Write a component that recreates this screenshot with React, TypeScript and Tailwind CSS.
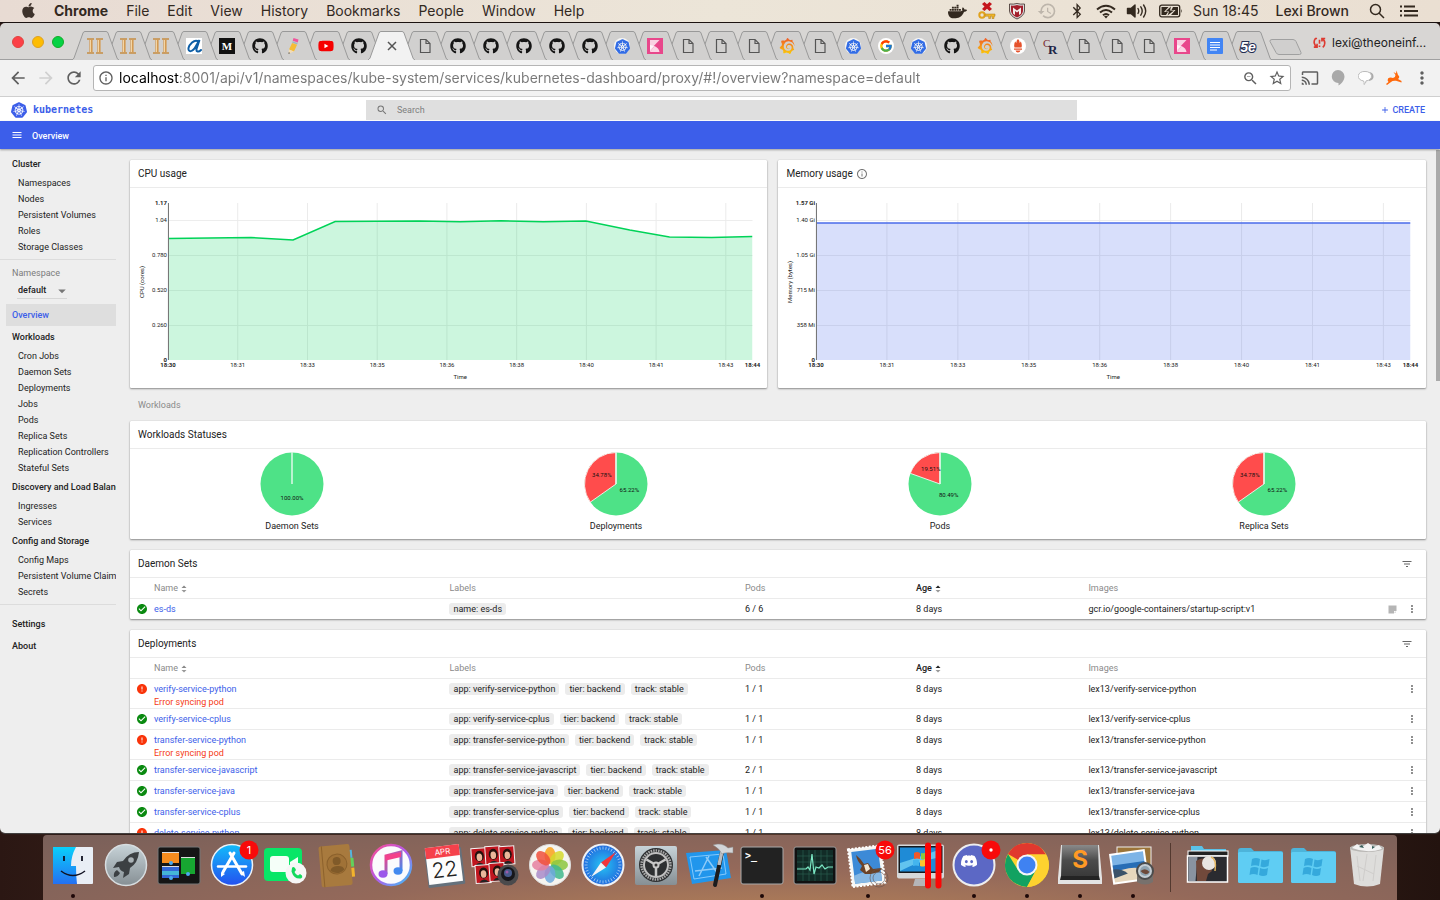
import React from 'react';
import { FaApple, FaBluetoothB, FaGithub, FaYoutube } from 'react-icons/fa';
import { SiDiscord, SiDocker, SiGrafana, SiKubernetes } from 'react-icons/si';
import { FcGoogle } from 'react-icons/fc';
import {
  MdAdd, MdArrowBack, MdArrowForward, MdCast, MdCheckCircle, MdError, MdFilterList, MdInfoOutline,
  MdMenu, MdMoreVert, MdRefresh, MdSearch, MdStarBorder, MdArrowDropDown, MdHistory, MdZoomOut,
} from 'react-icons/md';

/* ---------- Menu bar ---------- */

const menus = ['File', 'Edit', 'View', 'History', 'Bookmarks', 'People', 'Window', 'Help'];

function KeyIcon() {
  return (
    <svg viewBox="0 0 18 18" className="size-[18px]">
      <path d="M4 2 6.500 0 9 2.200 11.500 0 14 2l-2.500 2.500L14 7l-2.500 2L9 6.800 6.500 9 4 7l2.500-2.500Z" fill="#c4151c" />
      <circle cx="4" cy="13" r="2.700" fill="none" stroke="#e0a21d" strokeWidth="2" />
      <path d="M7 12h10v2.200h-1V16.500h-2v-2.300H12.500V16.500h-1.800v-2.300H7Z" fill="#eeb62b" stroke="#a87416" strokeWidth=".5" />
    </svg>
  );
}

function ShieldIcon() {
  return (
    <svg viewBox="0 0 18 18" className="size-[18px]">
      <path d="M1.500 2Q5.500 2.500 9 1.500 12.500 2.500 16.500 2V9Q16 14 9 17 2 14 1.500 9Z" fill="#ddd" stroke="#3a2a26" strokeWidth=".8" />
      <path d="M3 3.500Q6 4 9 3 12 4 15 3.500V9Q14.500 13 9 15.500 3.500 13 3 9Z" fill="#a31f2b" />
      <path d="M5 11.500V5.500L9 8.500 13 5.500V11.500L11 13V9L9 10.500 7 9V13Z" fill="#f3efec" />
    </svg>
  );
}

function MenuBar() {
  return (
    <header className="flex h-[23px] shrink-0 items-center border-b border-[#1b1210] bg-linear-to-r from-[#e8dbd3] via-[#ece5d8] to-[#eadfd2] pr-[22px] pl-5 text-[14px] leading-[22px] text-[#33291f]">
      <FaApple className="mb-0.5 size-[17px] text-[#3d322b]" />
      <nav className="ml-[17px] flex gap-[18px]">
        <span className="font-bold">Chrome</span>
        {menus.map((m) => <span key={m}>{m}</span>)}
      </nav>
      <div className="ml-auto flex items-center">
        <span className="flex w-[29px] justify-center"><SiDocker className="size-[19px]" /></span>
        <span className="flex w-[30px] justify-center"><KeyIcon /></span>
        <span className="flex w-[30px] justify-center"><ShieldIcon /></span>
        <span className="flex w-[30px] justify-center"><MdHistory className="size-5 text-[#bdb5ab]" /></span>
        <span className="flex w-[29px] justify-center"><FaBluetoothB className="size-4" /></span>
        <span className="flex w-[30px] justify-center">
          <svg viewBox="0 0 20 15" className="h-[15px] w-5" fill="none" stroke="currentColor" strokeWidth="2">
            <path d="M1 5.500q9-7.500 18 0M4 8.500q6-5 12 0M7 11.300q3-2.600 6 0" /><path d="M8 12.300q2-1.300 4 0L10 14.500Z" fill="currentColor" stroke="none" />
          </svg>
        </span>
        <span className="flex w-8 justify-center">
          <svg viewBox="0 0 22 16" className="h-4 w-[22px]" fill="none" stroke="currentColor" strokeWidth="1.400" strokeLinecap="round">
            <path d="M1.500 5.500H5L9 2v12L5 10.500H1.500Z" fill="currentColor" strokeLinejoin="round" />
            <path d="M12 5.500q1.500 2.500 0 5M14.800 3.800q2.800 4.200 0 8.400M17.600 2q4.200 6 0 12" />
          </svg>
        </span>
        <span className="flex w-9 justify-center">
          <svg viewBox="0 0 24 14" className="h-[14px] w-6">
            <rect x=".7" y="1.200" width="20" height="11.600" rx="2" fill="none" stroke="currentColor" strokeWidth="1.300" />
            <path d="M2.500 3H9.500L5 8H9L7 11H2.500ZM14 3H19V11H12L16.500 6H12.500Z" fill="currentColor" />
            <path d="M12 2.500 6.500 7.500H10L8.500 11.500 15 6.500H11Z" fill="currentColor" />
            <path d="M22 5q1.500 2 0 4Z" fill="currentColor" />
          </svg>
        </span>
        <span className="ml-1">Sun 18:45</span>
        <span className="ml-[17px] font-medium">Lexi Brown</span>
        <svg viewBox="0 0 16 16" className="ml-5 size-4" fill="none" stroke="currentColor" strokeWidth="1.500">
          <circle cx="6.500" cy="6.500" r="5" /><path d="m10 10 5 5" />
        </svg>
        <svg viewBox="0 0 18 12" className="ml-[15px] h-3 w-[18px]" stroke="currentColor" strokeWidth="2">
          <path d="M0 1.500h2M4 1.500h11M0 6h2M4 6h14M0 10.500h2M4 10.500h14" />
        </svg>
      </div>
    </header>
  );
}

/* ---------- Tabs ---------- */

const K8s = () => (
  <span className="flex size-4 items-center justify-center rounded-full bg-white/80">
    <SiKubernetes className="size-[15px] text-[#326ce5]" />
  </span>
);
const Git = () => <FaGithub className="size-4 text-[#151515]" />;
const Pillars = () => (
  <svg viewBox="0 0 16 16" className="size-4" fill="none">
    <path d="M0 1h16M0 15h16" stroke="#c58d45" strokeWidth="1.600" strokeDasharray="7 2" />
    <path d="M4 1.500v13M12 1.500v13" stroke="#d39a52" strokeWidth="3.200" />
    <path d="M3.500 2v12M11.500 2v12" stroke="#f3d6a6" />
  </svg>
);
const LetterA = () => (
  <svg viewBox="0 0 16 16" className="size-4">
    <rect width="16" height="16" fill="#fff" />
    <path d="M11.500 3C8 1.500 3.500 6 2.500 10c-.5 4.500 4 4.500 7.500-2L13.500 2 10.500 11c-.5 3 2 3.500 4.500 1" fill="none" stroke="#0d5ea6" strokeWidth="2" strokeLinecap="round" />
  </svg>
);
const Medium = () => (
  <svg viewBox="0 0 16 16" className="size-4">
    <rect width="16" height="16" fill="#111" />
    <text x="8" y="12" textAnchor="middle" fontSize="11" fontWeight="700" fill="#fff" fontFamily="Liberation Serif, serif">M</text>
  </svg>
);
const Pencil = () => (
  <svg viewBox="0 0 16 16" className="size-4">
    <path d="M8.500 0 13.500 1.600 12.800 4.500 7.700 2.800Z" fill="#f0559c" />
    <path d="M7.600 3.200 12.600 4.900 12.200 6.500 7.200 4.800Z" fill="#9fb4c0" />
    <path d="M7.100 5.100 12.100 6.800 9 13.500 4 11.500Z" fill="#f6bc36" />
    <path d="M4 11.500 9 13.500 3.500 16Z" fill="#f3dcb5" /><path d="m3.700 14.300 1.500.7L3.500 16Z" fill="#444" />
  </svg>
);
const Youtube = () => (
  <span className="relative flex size-4 items-center justify-center">
    <span className="absolute size-2 bg-white" /><FaYoutube className="relative size-4 text-[#f60000]" />
  </span>
);
const Page = () => (
  <svg viewBox="0 0 16 16" className="size-4" fill="none" stroke="#555" strokeWidth="1.200">
    <path d="M3.500 1.500H9L13 5.500V14.500H3.500ZM9 1.500V5.500H13" />
  </svg>
);
const Kibana = () => (
  <svg viewBox="0 0 16 16" className="size-4">
    <rect width="16" height="16" fill="#e8478b" />
    <path d="M3 2h9.500L3 12Z" fill="#fff" fillOpacity=".75" /><path d="M3 14 7.500 8q4.500 2 5 6Z" fill="#fbd5e5" /><path d="M3 7v7l4.500-6Z" fill="#fff" fillOpacity=".8" />
  </svg>
);
const Grafana = () => (
  <span className="flex size-4">
    <svg width="0" height="0" className="absolute">
      <defs><linearGradient id="graf" x1="0" y1="0" x2="0" y2="1"><stop offset="0" stopColor="#f05a28" /><stop offset="1" stopColor="#fbca0a" /></linearGradient></defs>
    </svg>
    <SiGrafana className="size-4 fill-[url(#graf)]" />
  </span>
);
const Google = () => <span className="flex size-4 items-center justify-center rounded-full bg-white"><FcGoogle className="size-[14px]" /></span>;
const Prom = () => (
  <span className="flex size-4 items-center justify-center rounded-full bg-white">
    <svg viewBox="0 0 12 14" className="h-[14px] w-3" fill="#e6522c">
      <path d="M6 0q2 2 1.500 4Q9 3 8.500 2q2 3 1 6.500h-7Q1.500 5 3.500 2 3 3 4.500 4 4 2 6 0ZM2 9.500h8v1.300H2ZM3.500 11.500h5q-.5 2-2.500 2t-2.500-2Z" />
    </svg>
  </span>
);
const Cr = () => (
  <svg viewBox="0 0 16 16" className="size-4 overflow-visible" fontFamily="Liberation Serif, serif">
    <text x="0" y="9" fontSize="11" fill="#7a2a2e">C</text><text x="5" y="16" fontSize="13" fontWeight="700" fill="#1d2547">R</text>
  </svg>
);
const Doc = () => (
  <svg viewBox="0 0 16 16" className="size-4">
    <rect width="16" height="16" rx="1" fill="#4285f4" /><path d="M3 4.500h10M3 7h10M3 9.500h10M3 12h7" stroke="#fff" strokeWidth="1.200" />
  </svg>
);
const FiveE = () => (
  <svg viewBox="0 0 16 16" className="size-4 overflow-visible">
    <text x="8" y="13.500" textAnchor="middle" fontSize="14" fontWeight="700" fontStyle="italic" fill="#fff" stroke="#232d52" strokeWidth="2" paintOrder="stroke" fontFamily="Liberation Sans, sans-serif">5e</text>
  </svg>
);
const CloseX = () => (
  <svg viewBox="0 0 16 16" className="size-4" stroke="#555" strokeWidth="1.500"><path d="m4 4 8 8M12 4l-8 8" /></svg>
);

const tabs = [
  Pillars, Pillars, Pillars, LetterA, Medium, Git, Pencil, Youtube, Git, CloseX, Page, Git, Git, Git, Git, Git, K8s,
  Kibana, Page, Page, Page, Grafana, Page, K8s, Google, K8s, Git, Grafana, Prom, Cr, Page, Page, Page, Kibana, Doc, FiveE,
];
const ACTIVE = 9;

function TabStrip() {
  return (
    <div className="flex h-[37px] shrink-0 border-b border-[#a0a0a0] bg-[#d8d6d4]">
      <div className="flex w-[79px] shrink-0 items-center gap-2 pt-px pl-3">
        <button aria-label="Close window" className="size-3 rounded-full border border-[#e0443e] bg-[#fc4047]" />
        <button aria-label="Minimise window" className="size-3 rounded-full border border-[#dea123] bg-[#fdbc02]" />
        <button aria-label="Zoom window" className="size-3 rounded-full border border-[#12ac28] bg-[#05d244]" />
      </div>
      <div className="flex min-w-0 flex-1 pt-2">
        {tabs.map((Icon, i) => (
          <button key={i} aria-label={`Tab ${i + 1}`} className="relative flex h-[29px] min-w-0 flex-1 items-center justify-center" style={{ zIndex: i === ACTIVE ? 50 : 40 - i }}>
            <svg viewBox="0 0 47 29" preserveAspectRatio="none" className="absolute -left-[7px] h-[29px] w-[47px]">
              <path d="M0 29 Q1.500 28 2 27 L11 2 Q11.500.5 13 .5 H34 Q35.500.5 36 2 L45 27 Q45.500 28.500 47 29" fill={i === ACTIVE ? '#f2f2f2' : '#d1d0cf'} stroke="#999" />
            </svg>
            <span className="relative shrink-0 pt-px"><Icon /></span>
          </button>
        ))}
      </div>
      <div className="flex w-[175px] shrink-0 items-center">
        <button aria-label="New tab" className="mt-[11px] ml-1">
          <svg viewBox="0 0 34 16" className="h-4 w-[34px]"><path d="M3 .5h21q2 0 3 2l5 11q.5 2-1.500 2H10q-2 0-3-2l-6-11q-.5-2 2-2Z" fill="#d0cfce" stroke="#a0a0a0" /></svg>
        </button>
        <button className="mt-[3px] ml-2.5 flex items-center text-[12px] leading-4 text-[#222]">
          <svg viewBox="0 0 16 14" className="mr-1.5 h-3 w-[13px]" fill="none" stroke="#dd3b31" strokeWidth="2">
            <path d="M5 1.500H3Q1 4 1.500 7T5 12M1 12h4V8M11 1.500q3.500 2 3.500 5.500T12 12.500M15 1.500h-4V5M8 3v5M8 10v2" />
          </svg>
          lexi@theoneinf...
        </button>
      </div>
    </div>
  );
}

function Toolbar() {
  return (
    <div className="flex h-[37px] shrink-0 items-center border-b border-[#cfcfcf] bg-[#f2f2f2] px-1 text-[#5f5f5f]">
      <button aria-label="Back" className="flex w-7 justify-center"><MdArrowBack className="size-5" /></button>
      <button aria-label="Forward" className="flex w-7 justify-center text-[#d0d0d0]"><MdArrowForward className="size-5" /></button>
      <button aria-label="Reload" className="flex w-7 justify-center"><MdRefresh className="size-5" /></button>
      <div className="ml-[5px] flex h-[26px] min-w-0 flex-1 items-center rounded-[3px] border border-[#b5b5b5] bg-white pl-1">
        <MdInfoOutline className="size-4 shrink-0" />
        <input
          aria-label="Address"
          defaultValue="localhost:8001/api/v1/namespaces/kube-system/services/kubernetes-dashboard/proxy/#!/overview?namespace=default"
          className="ml-[5px] min-w-0 flex-1 bg-linear-to-r from-black from-[60px] to-[#777] to-[60px] bg-clip-text text-[14px] leading-5 text-transparent outline-none"
        />
        <button aria-label="Zoomed out" className="flex w-7 justify-center"><MdZoomOut className="size-[17px]" /></button>
        <button aria-label="Bookmark" className="flex w-[26px] justify-center"><MdStarBorder className="size-[18px]" /></button>
      </div>
      <div className="ml-[5px] flex items-center">
        <button aria-label="Cast" className="flex w-7 justify-center"><MdCast className="size-[18px]" /></button>
        <button aria-label="Hangouts" className="flex w-7 justify-center">
          <svg viewBox="0 0 16 16" className="size-4"><path d="M8 0a6.500 6.500 0 0 1 6.500 6.500C14.500 10 12 13.500 8.500 15.500V13A6.500 6.500 0 0 1 8 0Z" fill="#a9a9a9" /></svg>
        </button>
        <button aria-label="Chat" className="flex w-7 justify-center">
          <svg viewBox="0 0 16 16" className="size-4"><path d="M10 2q5 0 5.500 4T11 11Z" fill="#aaa" /><path d="M7 1.500a6 4.700 0 0 1 1 9.400q0 2.500-2 3.600.5-2-.5-3.600A6 4.700 0 0 1 7 1.500Z" fill="#fff" stroke="#bbb" /></svg>
        </button>
        <button aria-label="Rabbit" className="flex w-7 justify-center">
          <svg viewBox="0 0 16 16" className="size-4" fill="#ff6a0d">
            <path d="M0 14 2.500 12Q1 10.500 2 8.500 4 7 7 8q2.500-.5 2.500-3L7.500 2 10 3.500 10.500.5 12 5q2.500 2 0 4l3.500 2V12.500L10 10.800q-3.500-.3-5 1.200L1 15Z" />
          </svg>
        </button>
        <button aria-label="Menu" className="flex w-7 justify-center"><MdMoreVert className="size-5" /></button>
      </div>
    </div>
  );
}

/* ---------- Dashboard ---------- */

const sections = [
  { title: 'Workloads', items: ['Cron Jobs', 'Daemon Sets', 'Deployments', 'Jobs', 'Pods', 'Replica Sets', 'Replication Controllers', 'Stateful Sets'] },
  { title: 'Discovery and Load Balancing', items: ['Ingresses', 'Services'] },
  { title: 'Config and Storage', items: ['Config Maps', 'Persistent Volume Claims', 'Secrets'] },
];

function NavSection({ title, items }: { title: string; items: string[] }) {
  return (
    <section>
      <a href="#" className="block pl-3 font-medium leading-[22px]">{title}</a>
      <ul>
        {items.map((it) => <li key={it}><a href="#" className="block pl-[18px] leading-4">{it}</a></li>)}
      </ul>
    </section>
  );
}

function Sidebar() {
  return (
    <nav className="w-[116px] shrink-0 overflow-hidden pt-[3px] whitespace-nowrap">
      <NavSection title="Cluster" items={['Namespaces', 'Nodes', 'Persistent Volumes', 'Roles', 'Storage Classes']} />
      <div className="mt-1 border-t border-[#dcdcdc] pt-[5px]">
        <label htmlFor="ns" className="block pl-3 leading-4 text-[#7c7c7c]">Namespace</label>
        <div className="relative mt-0.5 ml-[17px] flex h-4 w-[50px] items-center border-b border-[#d6d6d6]">
          <select id="ns" className="w-full appearance-none bg-transparent pl-px font-medium outline-none"><option>default</option></select>
          <MdArrowDropDown className="pointer-events-none absolute -right-1 size-[18px] text-[#777]" />
        </div>
      </div>
      <a href="#" className="mt-[5px] ml-1.5 block bg-[#dedede] pl-1.5 font-medium leading-[22px] text-[#3c5ee9]">Overview</a>
      {sections.map((s) => <NavSection key={s.title} {...s} />)}
      <div className="mt-1 border-t border-[#dcdcdc] pt-2 font-medium leading-[22px]">
        <a href="#" className="block pl-3">Settings</a>
        <a href="#" className="block pl-3">About</a>
      </div>
    </nav>
  );
}

function Card({ title, action, children }: { title: React.ReactNode; action?: React.ReactNode; children: React.ReactNode }) {
  return (
    <section className="min-w-0 rounded-[1px] bg-white shadow-[0_1px_2px_rgba(0,0,0,0.4),0_0_1px_rgba(0,0,0,0.25)]">
      <div className="flex h-7 items-center justify-between border-b border-[#ebebeb] pr-[13px] pl-2">
        <h2 className="flex items-center gap-[3px] text-[10px] leading-4">{title}</h2>
        {action}
      </div>
      {children}
    </section>
  );
}

const times = ['18:30', '18:31', '18:33', '18:35', '18:36', '18:38', '18:40', '18:41', '18:43'];

type ChartProps = { unit: string; labels: string[]; points: [number, number][]; line: string; fill: string };

/* Points are given as per mille of the plot's width and as pixels below its top. */
function Chart({ unit, labels, points, line, fill }: ChartProps) {
  const path = points.map(([x, y]) => `${x},${y}`).join(' ');
  const ys = [0, 17, 52, 87, 122, 157];
  return (
    <div className="h-[200px] pt-[15px] pr-[15px] pl-[38px]">
      <svg className="block h-[157px] w-full overflow-visible" fontSize="6" fill="#222" role="img" aria-label={unit}>
        {ys.slice(1, 5).map((y) => <line key={y} x1="0" x2="100%" y1={y + 0.5} y2={y + 0.5} stroke="#ededed" />)}
        {times.map((t, i) => <line key={t} x1={`${i * 11.93}%`} x2={`${i * 11.93}%`} y1="0" y2="157" stroke="#ebebeb" />)}
        <svg viewBox="0 0 1000 157" preserveAspectRatio="none" width="100%" height="157">
          <polygon points={`0,157 ${path} 1000,157`} fill={fill} fillOpacity=".2" />
          <polyline points={path} fill="none" stroke={line} strokeWidth="1.600" vectorEffect="non-scaling-stroke" />
        </svg>
        <line x1=".5" x2=".5" y1="0" y2="157" stroke="#777" />
        {labels.map((l, i) => (
          <text key={l} x="-1" y={ys[i] + 2} textAnchor="end" fontWeight={i === 0 || i === 5 ? 700 : 400}>{l}</text>
        ))}
        {times.map((t, i) => (
          <text key={t} x={`${i * 11.93}%`} y="164" textAnchor="middle" fontWeight={i === 0 ? 700 : 400}>{t}</text>
        ))}
        <text x="100%" y="164" textAnchor="middle" fontWeight="700">18:44</text>
        <text x="50%" y="176" textAnchor="middle">Time</text>
        <text transform="translate(-24 79) rotate(-90)" textAnchor="middle">{unit}</text>
      </svg>
    </div>
  );
}

function Pie({ name, red }: { name: string; red: number }) {
  const a = -red * 2 * Math.PI;
  const x = 32 + 31.5 * Math.sin(a);
  const y = 32 - 31.5 * Math.cos(a);
  const g = Math.PI * (1 - red);
  return (
    <div className="flex flex-col items-center pt-[3px]">
      <svg viewBox="0 0 64 64" className="size-16" fontSize="6" textAnchor="middle" fill="#111">
        <circle cx="32" cy="32" r="31.500" fill="#4ee287" />
        {red > 0 && <path d={`M32 32 L${x} ${y} A31.500 31.500 0 0 1 32 .5Z`} fill="#ff4c4c" stroke="#fff" strokeOpacity=".8" />}
        <path d="M32 0v32" stroke="#dff8e8" strokeWidth="1.500" />
        {red > 0 && <text x={32 - 16 * Math.sin(Math.PI * red)} y={32 - 16 * Math.cos(Math.PI * red)}>{(red * 100).toFixed(2)}%</text>}
        <text x={32 + 15 * Math.sin(g)} y={34 - 14 * Math.cos(g)}>{((1 - red) * 100).toFixed(2)}%</text>
      </svg>
      <span className="mt-0.5 leading-4">{name}</span>
    </div>
  );
}

function Sort({ active = false }: { active?: boolean }) {
  return (
    <svg viewBox="0 0 6 8" className="ml-[3px] inline h-2 w-1.5">
      <path d="M.5 3 3 .5 5.500 3Z" fill={active ? '#222' : '#888'} /><path d="M.5 5 3 7.500 5.500 5Z" fill="#999" />
    </svg>
  );
}

type Row = { name: string; labels: string[]; pods: string; image: string; error?: string; logs?: boolean };

const svc = (name: string, bad = false, pods = '1 / 1'): Row => ({
  name, pods, image: `lex13/${name}`, labels: [`app: ${name}`, 'tier: backend', 'track: stable'], error: bad ? 'Error syncing pod' : undefined,
});

const daemonSets: Row[] = [{ name: 'es-ds', labels: ['name: es-ds'], pods: '6 / 6', image: 'gcr.io/google-containers/startup-script:v1', logs: true }];
const deployments: Row[] = [
  svc('verify-service-python', true), svc('verify-service-cplus'), svc('transfer-service-python', true),
  svc('transfer-service-javascript', false, '2 / 1'), svc('transfer-service-java'), svc('transfer-service-cplus'), svc('delete-service-python', true),
];

function ResourceTable({ rows }: { rows: Row[] }) {
  return (
    <table className="w-full table-fixed border-separate border-spacing-0 text-left whitespace-nowrap">
      <colgroup>
        <col className="w-6" /><col className="w-[22.800%]" /><col className="w-[22.800%]" /><col className="w-[13.200%]" /><col className="w-[13.300%]" /><col /><col className="w-[50px]" />
      </colgroup>
      <thead>
        <tr className="h-5 leading-5 text-[#8a8a8a]">
          <th className="p-0" aria-label="Status" />
          <th className="p-0 font-normal">Name<Sort /></th>
          <th className="p-0 font-normal">Labels</th>
          <th className="p-0 font-normal">Pods</th>
          <th className="p-0 font-medium text-[#222]">Age<Sort active /></th>
          <th className="p-0 font-normal">Images</th>
          <th className="p-0" aria-label="Actions" />
        </tr>
      </thead>
      <tbody>
        {rows.map((r) => (
          <tr key={r.name} className={r.error ? 'h-[30px] align-top leading-5 *:border-t *:border-[#ebebeb]' : 'h-[21px] align-top leading-5 *:border-t *:border-[#ebebeb]'}>
            <td className="p-0 pt-1 pl-1.5">
              {r.error ? <MdError className="size-3 text-[#f9340a]" /> : <MdCheckCircle className="size-3 text-[#0a8a10]" />}
            </td>
            <td className="p-0">
              <a href="#" className="block text-[#3c5ee9]">{r.name}</a>
              {r.error && <div className="-mt-1 h-[13px] leading-[14px] text-[#f53b16]">{r.error}</div>}
            </td>
            <td className="p-0">
              <div className="flex h-5 items-center gap-1.5">
                {r.labels.map((l) => <span key={l} className="rounded-[3px] bg-[#ececec] px-1 leading-3">{l}</span>)}
              </div>
            </td>
            <td className="p-0">{r.pods}</td>
            <td className="p-0">8 days</td>
            <td className="p-0">{r.image}</td>
            <td className="p-0">
              <div className="flex h-5 items-center justify-end gap-[9px] pr-2 text-[#777]">
                {r.logs && (
                  <button aria-label="Logs">
                    <svg viewBox="0 0 9 9" className="size-[9px]"><path d="M.5.5h8V6H6v2.500H.5ZM6.700 8.200V6.700h1.500Z" fill="#b5b5b5" /></svg>
                  </button>
                )}
                <button aria-label="More"><MdMoreVert className="size-3" /></button>
              </div>
            </td>
          </tr>
        ))}
      </tbody>
    </table>
  );
}

const filterButton = <button aria-label="Filter"><MdFilterList className="size-3 text-[#666]" /></button>;

function Dashboard() {
  return (
    <div className="flex min-h-0 flex-1 flex-col bg-[#eeeeee] font-['Roboto',sans-serif] text-[9px] text-[#222]">
      <header className="flex h-6 shrink-0 items-center bg-white pt-px">
        <a href="#" className="flex w-[366px] items-center gap-1.5 pl-[11px] text-[#3c5ee9]">
          <SiKubernetes className="size-4" />
          <span className="font-['DejaVu_Sans_Mono',monospace] text-[10px] font-bold">kubernetes</span>
        </a>
        <label className="flex h-5 min-w-0 flex-1 items-center bg-[#dfdfdf] pl-[10px] text-[#777]">
          <MdSearch className="size-3" />
          <input aria-label="Search" placeholder="Search" className="ml-[9px] flex-1 bg-transparent leading-4 outline-none placeholder:text-[#808080]" />
        </label>
        <div className="flex w-[363px] justify-end pr-[15px]">
          <button className="flex items-center gap-0.5 font-medium leading-4 text-[#3c5ee9]"><MdAdd className="size-[10px]" />CREATE</button>
        </div>
      </header>
      <div className="z-10 flex h-7 shrink-0 items-center bg-[#3c5eea] pl-[11px] font-medium text-white shadow-[0_1px_2px_rgba(0,0,0,0.35)]">
        <button aria-label="Toggle navigation"><MdMenu className="size-3" /></button>
        <h1 className="ml-[9px] pt-0.5 leading-4">Overview</h1>
      </div>
      <div className="relative flex min-h-0 flex-1 pt-px">
        <Sidebar />
        <main className="min-w-0 flex-1 overflow-y-auto pt-[10px] pr-[14px] pl-[14px] [scrollbar-width:none]">
          <div className="grid grid-cols-[637fr_647fr] gap-[11px]">
            <Card title="CPU usage">
              <Chart unit="CPU (cores)" labels={['1.17', '1.04', '0.780', '0.520', '0.260', '0']} line="#00d358" fill="#00d358"
                points={[[0, 35.5], [142, 34.5], [214, 37], [286, 18.5], [430, 18], [500, 18.7], [570, 17.8], [642, 18.8], [715, 18], [790, 27], [858, 34], [930, 34.5], [1000, 33.5]]} />
            </Card>
            <Card title={<>Memory usage <MdInfoOutline className="size-3 text-[#777]" /></>}>
              <Chart unit="Memory (bytes)" labels={['1.57 Gi', '1.40 Gi', '1.05 Gi', '715 Mi', '358 Mi', '0']} line="#4a6bea" fill="#3c5eea"
                points={[[0, 20], [1000, 20]]} />
            </Card>
          </div>
          <h3 className="flex h-[33px] items-center pt-px pl-2 leading-4 text-[#8a8a8a]">Workloads</h3>
          <div className="flex flex-col gap-[11px]">
            <Card title="Workloads Statuses">
              <div className="grid h-[90px] grid-cols-4">
                <Pie name="Daemon Sets" red={0} />
                <Pie name="Deployments" red={0.3478} />
                <Pie name="Pods" red={0.1951} />
                <Pie name="Replica Sets" red={0.3478} />
              </div>
            </Card>
            <Card title="Daemon Sets" action={filterButton}><ResourceTable rows={daemonSets} /></Card>
            <Card title="Deployments" action={filterButton}><ResourceTable rows={deployments} /></Card>
          </div>
        </main>
        <div className="absolute top-px right-0 h-[231px] w-1 bg-[#a9a9a9]" />
      </div>
    </div>
  );
}

/* ---------- Dock ---------- */

const petals = ['#f9a11b', '#d5d92e', '#8cc63f', '#3fb98d', '#6ea8dc', '#a98bc9', '#e57fa0', '#f0503c'];
const ticks = Array.from({ length: 36 }, (_, i) => i * 10);
const booth: [number, number][] = [[-3, 4], [11, 3], [25, 4], [0, 21], [14, 20]];

function Badge({ text }: { text: string }) {
  return (
    <g>
      <circle cx="39" cy="7" r="9.500" fill="#f80a0a" />
      <text x="39" y="11" textAnchor="middle" fontSize="11" fill="#fff">{text}</text>
    </g>
  );
}

const Folder = () => (
  <g>
    <path d="M-1 8q0-3 3-3h10l3 3h27q2 0 2 2v5H-1Z" fill="#4db4da" />
    <rect x="-1" y="9" width="45" height="31" rx="1.500" fill="#5fcdf3" />
    <path d="M13 16q4-2 8 0l-1 7q-4-1.500-8 0ZM22.500 16.500q4 1.500 8-.5l-1 7q-4 2-8 .5ZM11.500 25q4-2 8 0l-1 7q-4-2-8 0ZM21 25q4 2 8 0l-1 7q-4 2-8 0Z" fill="#35a9dc" />
  </g>
);

type DockItem = { name: string; running?: boolean; art: React.ReactNode };

const apps: DockItem[] = [
  { name: 'Finder', running: true, art: <g><rect x="2" y="4" width="40" height="37" rx="1" fill="#e9eef5" /><path d="M2 4h23q-5 9-5 19h5q0 10 1 18H2Z" fill="url(#finder)" /><path d="M13 13v5M31 13v5" stroke="#112" strokeWidth="1.800" /><path d="M10 28q12 9 24 0" fill="none" stroke="#112" strokeWidth="1.500" /></g> },
  { name: 'Launchpad', art: <g><circle cx="22" cy="22" r="20.500" fill="url(#silver)" stroke="#d7dde0" strokeWidth="1.500" /><path d="M35 9q-10 0-16 9l-6 1-4 6 6-1q1 4 5 5l-1 6 6-4 1-6q8-5 9-16Z" fill="#3c4043" /><circle cx="27" cy="17" r="2.800" fill="#aab2b6" /><path d="M13 27q-4 2-3 7 4 0 6-4Z" fill="#3c4043" /></g> },
  { name: 'Mission Control', art: <g><rect x="1" y="4" width="42" height="37" rx="2" fill="#151515" stroke="#777" /><rect x="5" y="10" width="17" height="10" fill="#f68c1e" /><rect x="5" y="24" width="17" height="11" fill="#3366d6" /><path d="M5 28h17v4H5Z" fill="#45b5d8" /><rect x="24" y="15" width="14" height="16" fill="#17a631" /><path d="M5 9.500h17M5 23.500h17M24 14.500h14" stroke="#ddd" /><g fill="#4aa9ee"><circle cx="14" cy="20" r="2" /><circle cx="14" cy="35" r="2" /><circle cx="31" cy="31" r="2" /></g></g> },
  { name: 'App Store', art: <g><circle cx="22" cy="22" r="20.500" fill="url(#store)" stroke="#eef2f6" strokeWidth="1.500" /><g stroke="#fff" strokeWidth="3" strokeLinecap="round"><path d="M24 10 13 29M20 10l12 21" /><path d="M8 23.500h28" strokeWidth="2.500" /></g><path d="m11 29 4 2-4 3ZM30 30l4-2 1 6Z" fill="#fff" /><Badge text="1" /></g> },
  { name: 'FaceTime', art: <g><rect x="1" y="5" width="38" height="33" rx="4" fill="#08e667" /><rect x="7" y="13" width="19" height="16" rx="3" fill="#f5fff8" /><path d="m27 19 8-5v14l-8-5Z" fill="#f5fff8" /><circle cx="33" cy="30" r="10.500" fill="#f6f6f6" /><path d="M29 25q1-2 3 0l1 2-1.500 2q1 2.500 3.500 3.500l2-1.500 2 1.500q1 2-1 3-7 1-9.500-7Z" fill="#14d95d" /></g> },
  { name: 'Contacts', art: <g transform="rotate(-5 22 22)"><path d="M33 8h4v8h-4Z" fill="#55b4dd" /><path d="M33 16h5v9h-5Z" fill="#62d15c" /><path d="M33 26h5v9h-5Z" fill="#f2b32d" /><rect x="4" y="2" width="31" height="41" rx="2" fill="#a87a3e" /><path d="M7 2v41" stroke="#8d622d" /><circle cx="21" cy="21" r="10" fill="#a07237" stroke="#8a602c" /><circle cx="21" cy="18" r="4" fill="#805a29" /><path d="M14 27q1-4 7-4t7 4q-7 6-14 0Z" fill="#805a29" /></g> },
  { name: 'iTunes', art: <g><circle cx="22" cy="22" r="20" fill="#fbfbfd" stroke="url(#tunes)" strokeWidth="2.500" /><path d="M17 31V13l15-4v19" fill="none" stroke="url(#note)" strokeWidth="3" /><path d="M17 12.500 32 9v5l-15 3.500Z" fill="#f4408b" /><ellipse cx="14" cy="31" rx="4.500" ry="3.700" fill="#9b57ea" /><ellipse cx="29" cy="28" rx="4.500" ry="3.700" fill="#4389ef" /></g> },
  { name: 'Calendar', art: <g transform="rotate(-7 22 22)"><rect x="4" y="6" width="37" height="37" rx="1" fill="#65717c" /><rect x="5" y="3" width="34" height="37" fill="#fdfdfd" /><path d="M5 3h34v11H5Z" fill="#f5414b" /><text x="22" y="11.500" textAnchor="middle" fontSize="8" fill="#fff">APR</text><text x="22" y="34" textAnchor="middle" fontSize="21" fontWeight="300" fill="#222">22</text></g> },
  { name: 'Photo Booth', art: <g><g transform="rotate(-4 22 22)">{booth.map(([x, y]) => <g key={`${x}-${y}`}><rect x={x} y={y} width="15" height="18" fill="#c0161f" stroke="#f3f3f3" /><ellipse cx={x + 8} cy={y + 8} rx="4.500" ry="5.500" fill="#23110e" /><ellipse cx={x + 8} cy={y + 9} rx="2.800" ry="3.800" fill="#eab79b" /><path d={`M${x + 3} ${y + 17.5}q5-6 10 0Z`} fill="#222" /></g>)}</g><circle cx="33" cy="32" r="10.500" fill="#4a4a4c" /><circle cx="33" cy="31" r="7" fill="#17171b" /><circle cx="33" cy="30" r="4" fill="#475a8c" /><circle cx="32" cy="29" r="1.500" fill="#9a5aa8" /></g> },
  { name: 'Photos', art: <g><circle cx="22" cy="22" r="20.500" fill="#f5f4f0" stroke="#ddd" />{petals.map((c, i) => <ellipse key={c} cx="22" cy="12.500" rx="5.500" ry="8.500" fill={c} fillOpacity=".85" transform={`rotate(${i * 45} 22 22)`} />)}</g> },
  { name: 'Safari', art: <g><circle cx="22" cy="22" r="20.500" fill="url(#safari)" stroke="#f0f2f5" strokeWidth="2" />{ticks.map((t) => <path key={t} d="M22 3.500v3" stroke="#d6ebff" strokeWidth=".6" transform={`rotate(${t} 22 22)`} />)}<path d="M35 9 20 19.500 25 24.500Z" fill="#f2353b" /><path d="M10 34 20 19.500 25 24.500Z" fill="#f3f3f5" /></g> },
  { name: 'System Preferences', art: <g><rect x="1" y="3" width="42" height="39" rx="2" fill="url(#silver)" /><circle cx="22" cy="22" r="17" fill="#2e3032" /><circle cx="22" cy="22" r="14.500" fill="none" stroke="#aaa" strokeWidth="2.500" strokeDasharray="1.500 1" /><circle cx="22" cy="22" r="12" fill="none" stroke="#c0c0c0" strokeWidth="2" /><path d="M22 22 12.500 16.500M22 22v11M22 22l9.500-5.500" stroke="#c8c8c8" strokeWidth="2.500" /><circle cx="22" cy="22" r="3.500" fill="#c8c8c8" /><circle cx="22" cy="22" r="1.500" fill="#333" /></g> },
  { name: 'Xcode', art: <g><path d="m-1 10 40-3 5 28-39 6Z" fill="#2196ec" /><path d="m3 14 33-3 3 20-32 5Z" fill="none" stroke="#9ed5ff" strokeWidth=".8" /><path d="m22 13-10 20M19 14l12 17M8 28l27-3" fill="none" stroke="#8fcbf8" strokeWidth="1.500" /><path d="M35 9 28 42" stroke="#1c1c1e" strokeWidth="4" strokeLinecap="round" /><path d="m35 8-3 14" stroke="#b9bec3" strokeWidth="3.500" /><path d="M26 2q9-3 15 3l5-1v6q-8-1-11 1-2-5-9-9Z" fill="#d2d5d8" stroke="#888" strokeWidth=".5" /></g> },
  { name: 'Terminal', running: true, art: <g><rect x="1" y="4" width="42" height="37" rx="2" fill="#222" stroke="#aaa" /><text x="5" y="16" fontSize="10" fontWeight="700" fill="#fff" fontFamily="DejaVu Sans Mono, monospace">&gt;_</text></g> },
  { name: 'Activity Monitor', art: <g><rect x="1" y="4" width="42" height="37" rx="2" fill="#111" stroke="#999" /><rect x="4" y="7" width="36" height="31" fill="#122c27" /><path d="M10 7v31M16 7v31M22 7v31M28 7v31M34 7v31M4 13h36M4 19h36M4 25h36M4 31h36" stroke="#285b4e" strokeWidth=".7" /><path d="M4 26h9l2-2 2 3 2-16 2 20 2-7 3 1 3-3 3 4 3-2h5" fill="none" stroke="#7ce8c4" strokeWidth="1.200" /></g> },
  { name: 'Mail', running: true, art: <g><g transform="rotate(-7 22 22)"><rect x="4" y="4" width="33" height="38" fill="#f6f6f4" stroke="#fff" strokeWidth="2" strokeDasharray="2 1.500" /><rect x="7" y="7" width="27" height="32" fill="#3c8ad7" /><path d="M7 31q12-5 27 0v8H7Z" fill="#86b8e4" /></g><path d="M10 12q4 3 8 9l4-1 5 6 9-1-3 4-8 2-6 0-5-4 2-4Q11 18 10 12Z" fill="#6c4327" /><path d="m18 22 4-1 2 5-4 3Z" fill="#f4e9d5" /><circle cx="33" cy="35" r="9" fill="none" stroke="#665450" strokeWidth="1" opacity=".6" /><circle cx="33" cy="35" r="6" fill="none" stroke="#665450" strokeWidth="1" opacity=".6" /><Badge text="56" /></g> },
  { name: 'Parallels Desktop', art: <g><path d="m16 36-2 7h15l-2-7Z" fill="#b5b5b8" /><rect x="-2" y="1.500" width="47" height="34" rx="2" fill="#d5d8da" /><rect x="-.5" y="3" width="44" height="27" fill="#16181c" /><rect x="1" y="4.500" width="41" height="24" fill="#1f8bd6" /><path d="M1 20q20-6 41-14v8Q20 18 1 28Z" fill="#62c4ef" /><path d="M15 10q3-2 6 0v6q-3-1-6 0Z" fill="#f1592a" /><path d="M22 10q3 1 5-1v7q-2 1-5 0Z" fill="#8cc83c" /><path d="M14 17q3-1 6 0v6q-3-1-6 0Z" fill="#44b5ee" /><path d="M21 17q3 1 5-1v7q-2 1-5 0Z" fill="#fdc52c" /><path d="M29 2.500v40M39.500 2.500v40" stroke="#fb0606" strokeWidth="6" strokeLinecap="round" /></g> },
  { name: 'Discord', running: true, art: <g><circle cx="22" cy="22" r="20.500" fill="#5c68c5" stroke="#eee" strokeWidth="2" /><SiDiscord x="9" y="10" width="26" height="26" color="#fff" /><circle cx="39" cy="7" r="9.500" fill="#f80a0a" /><circle cx="39" cy="7" r="1.700" fill="#fff" /></g> },
  { name: 'Chrome', running: true, art: <g><circle cx="22" cy="22" r="22" fill="#fdd22f" /><path d="M22 22 3 11Q9 0 22 0t19 11.500H22Z" fill="#e0382e" /><path d="M3 11Q-4 24 5 36q6 7 17 8l9-17-18 0Z" fill="#12a261" /><path d="M22 11.500h19q7 14-3 25Q32 44 22 44l9.500-17Z" fill="#fdd22f" /><circle cx="22" cy="22" r="10.500" fill="#f6f6f6" /><circle cx="22" cy="22" r="8.500" fill="#3f82f2" /></g> },
  { name: 'Sublime Text', running: true, art: <g><path d="m3 2h38l3 33v6H0v-6Z" fill="#e3e3e3" /><path d="M4 2h36l1 31H3Z" fill="url(#sublime)" /><path d="M3 33h38l1 4H2Z" fill="#242424" /><text x="22" y="25" textAnchor="middle" fontSize="24" fontWeight="700" fill="#ff9a24">S</text></g> },
  { name: 'Preview', running: true, art: <g><rect x="6" y="4" width="34" height="27" fill="#9b7438" stroke="#eee" /><g transform="rotate(-8 20 24)"><rect x="0" y="8" width="36" height="31" fill="#fff" /><path d="M2 10h32v12H2Z" fill="#7db4e6" /><path d="M2 20h32v9H2Z" fill="#276db5" /><path d="M2 29q14-8 32-1v9H2Z" fill="#e7d7bd" /><path d="M2 24q8 0 14 6L2 33Z" fill="#3c5268" /></g><path d="M26 30q8 5 16 0l0 9q-8 5-16 0Z" fill="#77716d" /><circle cx="34" cy="28" r="8" fill="#c4cdd3" stroke="#4c4c4c" strokeWidth="2" /><circle cx="34" cy="28" r="5" fill="#8fa3b0" /><path d="M29.500 28q5-4 9 1-4 5-9-1Z" fill="#6d4a3a" /></g> },
];

const places: DockItem[] = [
  { name: 'Pictures', art: <g><path d="M5 3h11l2 3h22v5H5Z" fill="#5ac2e8" /><rect x="2" y="8" width="40" height="5" fill="#222" stroke="#fff" /><rect x="1.500" y="13" width="40" height="26" fill="#2a2b30" stroke="#fff" strokeWidth="1.500" /><path d="M2.500 14h9l-2 24h-7Z" fill="#8993a0" /><path d="M10 18q8-6 12 2l4 8-4 3-2 7H11Z" fill="#71493b" /><ellipse cx="23" cy="20" rx="7" ry="7" fill="#e8e5e2" /><path d="M25 14q6 2 4 14" fill="none" stroke="#e2b45d" strokeWidth="1.500" /></g> },
  { name: 'Folder one', art: <Folder /> },
  { name: 'Folder two', art: <Folder /> },
  { name: 'Trash', art: <g><path d="M5 4h34l-4 37q-13 5-26 0Z" fill="#dedddb" /><ellipse cx="22" cy="5" rx="17" ry="4" fill="#b9b7b4" /><path d="m7 5 5-4 5 3 6-4 6 4 5-2 3 4q-15 5-30-1Z" fill="#f3f3f3" /><path d="m14 4 3-2 2 3ZM27 3l3 1-3 2Z" fill="#355d58" /><path d="m12 13 3 25M22 11l-4 27M31 12l-3 26M12 23l17 8" stroke="#cfcdcb" /></g> },
];

function DockIcon({ item }: { item: DockItem }) {
  return (
    <button aria-label={item.name} className="relative flex min-w-0 flex-1 justify-center pt-2">
      <svg viewBox="0 0 44 44" className="size-11 overflow-visible">{item.art}</svg>
      {item.running && <span className="absolute bottom-0.5 size-1 rounded-full bg-[#1d0808]" />}
    </button>
  );
}

function Dock() {
  return (
    <footer className="mx-[43px] mt-0.5 flex h-[65px] shrink-0 rounded-t-[4px] bg-[radial-gradient(ellipse_at_55%_140%,#b98457_0%,#94695a_45%,#79605a_100%)] pr-[3px] pl-1">
      <svg width="0" height="0" className="absolute">
        <defs>
          <linearGradient id="finder" x1="0" y1="0" x2="0" y2="1"><stop offset="0" stopColor="#09d0fb" /><stop offset="1" stopColor="#2470f2" /></linearGradient>
          <linearGradient id="silver" x1="0" y1="0" x2="0" y2="1"><stop offset="0" stopColor="#c7d3d8" /><stop offset="1" stopColor="#868f94" /></linearGradient>
          <linearGradient id="store" x1="0" y1="0" x2="0" y2="1"><stop offset="0" stopColor="#12bbfa" /><stop offset="1" stopColor="#2450ef" /></linearGradient>
          <linearGradient id="tunes" x1="0" y1="0" x2="1" y2="1"><stop offset="0" stopColor="#fb4b8c" /><stop offset=".5" stopColor="#b35bea" /><stop offset="1" stopColor="#36c6f5" /></linearGradient>
          <linearGradient id="note" x1="0" y1="0" x2="1" y2="1"><stop offset="0" stopColor="#f4408b" /><stop offset="1" stopColor="#4389ef" /></linearGradient>
          <radialGradient id="safari"><stop offset="0" stopColor="#26c5f4" /><stop offset="1" stopColor="#2169dd" /></radialGradient>
          <linearGradient id="sublime" x1="0" y1="0" x2="0" y2="1"><stop offset="0" stopColor="#8a8a8a" /><stop offset=".5" stopColor="#4b4b4b" /><stop offset="1" stopColor="#3a3a3a" /></linearGradient>
        </defs>
      </svg>
      {apps.map((a) => <DockIcon key={a.name} item={a} />)}
      <div className="mx-[11px] my-2 w-px bg-[#53392f]" />
      {places.map((a) => <DockIcon key={a.name} item={a} />)}
    </footer>
  );
}

export default function App() {
  return (
    <div className="flex h-screen w-full flex-col overflow-hidden bg-linear-to-r from-[#2b1713] via-[#5a3a2c] to-[#23130f] font-['Inter',sans-serif]">
      <MenuBar />
      <div className="flex min-h-0 flex-1 flex-col overflow-hidden rounded-[5px] shadow-[0_1px_1px_#444]">
        <TabStrip />
        <Toolbar />
        <Dashboard />
      </div>
      <Dock />
    </div>
  );
}
